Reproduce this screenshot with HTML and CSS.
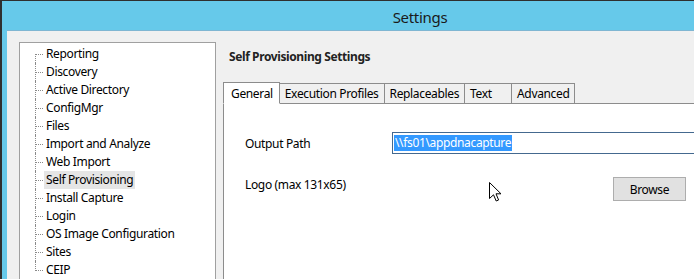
FILE: index.html
```html
<!DOCTYPE html>
<html lang="en">

<head>
    <meta charset="UTF-8">
    <title>Settings</title>
    <link rel="stylesheet" href="styles.css">
</head>

<body>
    <div class="window">
        <div class="titlebar">Settings</div>

        <div class="client">
            <ul class="tree">
                <li><span>Reporting</span></li>
                <li><span>Discovery</span></li>
                <li><span>Active Directory</span></li>
                <li><span>ConfigMgr</span></li>
                <li><span>Files</span></li>
                <li><span>Import and Analyze</span></li>
                <li><span>Web Import</span></li>
                <li class="selected"><span>Self Provisioning</span></li>
                <li><span>Install Capture</span></li>
                <li><span>Login</span></li>
                <li><span>OS Image Configuration</span></li>
                <li><span>Sites</span></li>
                <li><span>CEIP</span></li>
            </ul>

            <div class="main">
                <h2 class="main-title">Self Provisioning Settings</h2>

                <div class="tabs">
                    <div class="tab active">General</div>
                    <div class="tab">Execution Profiles</div>
                    <div class="tab">Replaceables</div>
                    <div class="tab">Text</div>
                    <div class="tab">Advanced</div>
                </div>

                <div class="tab-pane">
                    <div class="field-row">
                        <label class="field-label">Output Path</label>
                        <div class="textbox"><span class="selection">\\fs01\appdnacapture</span></div>
                    </div>
                    <div class="field-row logo-row">
                        <label class="field-label">Logo (max 131x65)</label>
                        <button class="btn">Browse</button>
                    </div>
                </div>
            </div>
        </div>
    </div>

    <svg class="cursor" width="13" height="21" viewBox="0 0 13 21">
        <path d="M0.5 0.5 L0.5 16.5 L4.5 12.8 L7.2 19 L9.6 18 L7 11.8 L12 11.8 Z" fill="#fff" stroke="#000"
            stroke-width="1" stroke-linejoin="miter" />
    </svg>
</body>

</html>
```

FILE: styles.css
```css
* {
    margin: 0;
    padding: 0;
    box-sizing: border-box;
}

body {
    font-family: "Noto Sans", "Open Sans", Arial, sans-serif;
    font-size: 12px;
    letter-spacing: -0.35px;
    color: #000;
    background: #66c9ea;
    overflow: hidden;
    height: 279px;
}

.window {
    width: 836px;
    height: 279px;
    background: #66c9ea;
    border-top: 1px solid #2f2f2f;
    border-left: 2px solid #2f2f2f;
    display: flex;
    flex-direction: column;
}

.titlebar {
    height: 29px;
    line-height: 33px;
    text-align: center;
    font-size: 15px;
    color: #1a1a1a;
    letter-spacing: -0.3px;
    padding-left: 2px;
}

.client {
    flex: 1;
    margin-left: 5px;
    background: #f0f0f0;
    border-top: 1px solid #7fb6d2;
    display: flex;
    padding: 11px 0 0 12px;
    gap: 7px;
}

/* tree view */
.tree {
    list-style: none;
    width: 197px;
    flex: none;
    background: #fff;
    border: 1px solid #a0a0a0;
    border-bottom: none;
    padding: 2px 0 0 15px;
    align-self: stretch;
}

.tree li {
    position: relative;
    height: 18px;
    line-height: 18px;
    padding-left: 9px;
    white-space: nowrap;
}

.tree li::before {
    content: '';
    position: absolute;
    left: 0;
    top: 0;
    height: 18px;
    border-left: 1px dotted #8a8a8a;
}

.tree li:first-child::before {
    top: 9px;
    height: 9px;
}

.tree li:last-child::before {
    height: 10px;
}

.tree li::after {
    content: '';
    position: absolute;
    left: 1px;
    top: 9px;
    width: 7px;
    border-top: 1px dotted #8a8a8a;
}

.tree span {
    display: inline-block;
    padding: 0 2px;
}

.tree .selected span {
    background: #e5e5e5;
}

/* right side */
.main {
    flex: 1;
    display: flex;
    flex-direction: column;
}

.main-title {
    font-size: 12px;
    font-weight: 700;
    color: #222;
    padding: 8px 0 0 6px;
    height: 38px;
    line-height: 14px;
    letter-spacing: -0.4px;
}

.tabs {
    display: flex;
    align-items: flex-end;
    height: 22px;
    margin-top: 1px;
    position: relative;
    z-index: 1;
}

.tab {
    height: 20px;
    line-height: 19px;
    padding: 0 5px;
    min-width: 48px;
    border: 1px solid #8c8c8c;
    border-bottom: none;
    margin-right: -1px;
    background: #f0f0f0;
    white-space: nowrap;
}

.tab.active {
    height: 22px;
    line-height: 21px;
    background: #fff;
    padding: 0 6px 0 7px;
    border-bottom: 1px solid #fff;
    margin-bottom: -1px;
    position: relative;
    z-index: 2;
}

.tab-pane {
    flex: 1;
    background: #fff;
    border-top: 1px solid #8c8c8c;
    border-left: 1px solid #8c8c8c;
    padding: 28px 0 0 21px;
}

.field-row {
    display: flex;
    align-items: center;
}

.field-label {
    width: 147px;
    flex: none;
}

.textbox {
    width: 330px;
    height: 22px;
    border: 1px solid #44698f;
    padding: 2px 0 0 1px;
    background: #fff;
    white-space: nowrap;
    line-height: 15px;
}

.selection {
    display: inline-block;
    background: #3399ff;
    color: #fff;
    height: 16px;
    padding: 0 1px;
}

.logo-row {
    margin-top: 23px;
    align-items: flex-start;
}

.logo-row .field-label {
    line-height: 16px;
}

.btn {
    margin-left: 221px;
    width: 73px;
    height: 24px;
    font-family: inherit;
    font-size: 12px;
    letter-spacing: inherit;
    color: #000;
    background: #e1e1e1;
    border: 1px solid #adadad;
}

.cursor {
    position: absolute;
    left: 489px;
    top: 182px;
}
```
